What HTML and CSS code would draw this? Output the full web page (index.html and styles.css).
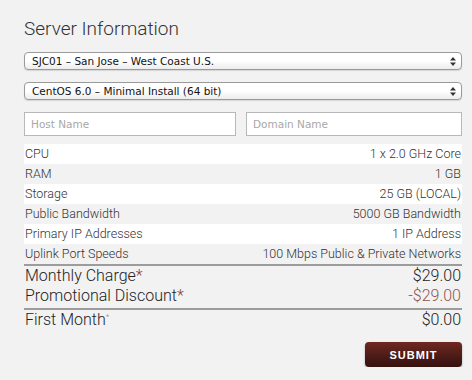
FILE: index.html
```html
<!DOCTYPE html>
<html lang="en">
<head>
    <meta charset="UTF-8">
    <meta name="viewport" content="width=device-width, initial-scale=1.0">
    <title>Server Information</title>
    <link rel="stylesheet" href="styles.css">
</head>
<body>

    <div class="container">
        <h1>Server Information</h1>

        <div class="picker">
            <select>
                <option>SJC01 – San Jose – West Coast U.S.</option>
            </select>
            <svg class="arrows" width="6" height="9" viewBox="0 0 6 9"><path d="M3 0 L6 3.5 H0 Z M0 5.5 H6 L3 9 Z" fill="#333"/></svg>
        </div>
        <div class="picker">
            <select>
                <option>CentOS 6.0 – Minimal Install (64 bit)</option>
            </select>
            <svg class="arrows" width="6" height="9" viewBox="0 0 6 9"><path d="M3 0 L6 3.5 H0 Z M0 5.5 H6 L3 9 Z" fill="#333"/></svg>
        </div>

        <div class="names">
            <input class="host" type="text" placeholder="Host Name"/>
            <input class="domain" type="text" placeholder="Domain Name"/>
        </div>

        <div class="specs">
            <div class="spec"><span>CPU</span><span>1 x 2.0 GHz Core</span></div>
            <div class="spec"><span>RAM</span><span>1 GB</span></div>
            <div class="spec"><span>Storage</span><span>25 GB (LOCAL)</span></div>
            <div class="spec"><span>Public Bandwidth</span><span>5000 GB Bandwidth</span></div>
            <div class="spec"><span>Primary IP Addresses</span><span>1 IP Address</span></div>
            <div class="spec"><span>Uplink Port Speeds</span><span>100 Mbps Public &amp; Private Networks</span></div>
        </div>

        <div class="totals">
            <div class="total"><span>Monthly Charge<em>*</em></span><span>$29.00</span></div>
            <div class="total"><span>Promotional Discount<em>*</em></span><span class="discount">-$29.00</span></div>
        </div>
        <div class="first">
            <div class="total"><span>First Month<sup>*</sup></span><span>$0.00</span></div>
        </div>

        <div class="actions">
            <button>SUBMIT</button>
        </div>
    </div>

</body>
</html>
```

FILE: styles.css
```css
body {
    margin: 0;
    background-color: #f2f2f2;
    font-family: "Liberation Sans", Arial, sans-serif;
    color: #222;
}

.container {
    padding: 16px 10px 0 24px;
}

h1 {
    margin: 0 0 10px 0;
    font-family: Roboto, "Liberation Sans", sans-serif;
    font-weight: 300;
    font-size: 19px;
    line-height: 26px;
    color: #333;
}

.picker {
    position: relative;
    margin-bottom: 12px;
}

.picker select {
    appearance: none;
    -webkit-appearance: none;
    display: block;
    width: 100%;
    height: 18px;
    padding: 0 0 0 7px;
    border: 1px solid #9a9a9a;
    border-radius: 4px;
    background: linear-gradient(#ffffff, #ffffff 50%, #ececec);
    box-shadow: 0 1px 1px rgba(0, 0, 0, 0.12);
    font-family: "DejaVu Sans", sans-serif;
    font-size: 10.5px;
    color: #111;
}

.picker .arrows {
    position: absolute;
    right: 6px;
    top: 5px;
}

.names {
    display: flex;
    justify-content: space-between;
    margin-bottom: 8px;
}

.names input {
    height: 24px;
    box-sizing: border-box;
    padding: 0 6px;
    border: 1px solid #b8b8b8;
    background: #fff;
    font-family: "DejaVu Sans", sans-serif;
    font-size: 10.5px;
}

.names .host {
    width: 212px;
}

.names .domain {
    width: 216px;
}

.names input::placeholder {
    color: #a8a8a8;
}

.specs {
    border-bottom: 2px solid #9c9c9c;
}

.spec {
    display: flex;
    justify-content: space-between;
    height: 20px;
    line-height: 20px;
    padding: 0 1px;
    font-family: Roboto, "Liberation Sans", sans-serif;
    font-weight: 300;
    font-size: 12.5px;
    color: #333;
}

.spec:nth-child(odd) {
    background-color: #fff;
}

.totals {
    border-bottom: 2px solid #9c9c9c;
    padding-bottom: 2px;
}

.total {
    display: flex;
    justify-content: space-between;
    height: 20px;
    line-height: 20px;
    padding: 0 1px;
    font-family: Roboto, "Liberation Sans", sans-serif;
    font-weight: 300;
    font-size: 16px;
    color: #222;
}

.total em {
    font-style: normal;
    color: #8d3b36;
}

.total sup {
    font-size: 8px;
    line-height: 0;
    vertical-align: 6px;
    color: #888;
}

.discount {
    color: #8f5752;
}

.actions {
    display: flex;
    justify-content: flex-end;
    margin-top: 12px;
}

button {
    width: 97px;
    height: 25px;
    border: none;
    border-radius: 4px;
    background: linear-gradient(#70281f, #4a1a16 60%, #35120f);
    box-shadow: 0 1px 2px rgba(0, 0, 0, 0.35);
    color: #fff;
    font-family: "Liberation Sans", Arial, sans-serif;
    font-weight: bold;
    font-size: 11px;
    letter-spacing: 1px;
    cursor: pointer;
}
```
